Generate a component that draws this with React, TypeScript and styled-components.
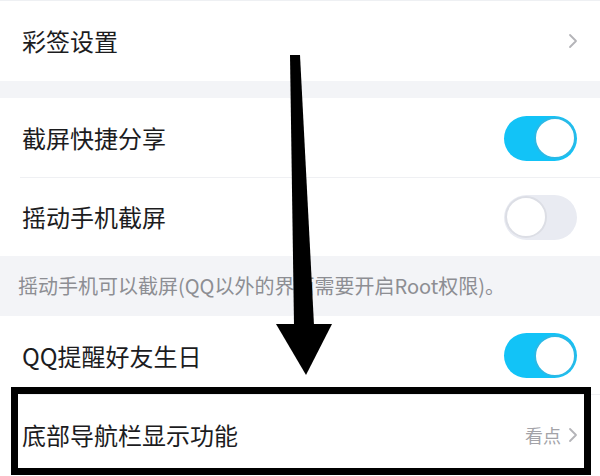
import React from "react";
import styled, { createGlobalStyle } from "styled-components";

const Global = createGlobalStyle`
  html, body { margin: 0; padding: 0; background: #ffffff; }
  body { font-family: "Noto Sans CJK SC", "Noto Sans", sans-serif; }
`;

const Page = styled.div`
  position: relative;
  width: 600px;
  height: 476px;
  overflow: hidden;
  background: #ffffff;
  border-top: 1px solid #eef0f3;
  box-sizing: border-box;
  display: flex;
  flex-direction: column;
`;

const Row = styled.div<{ $h: number; $divider?: boolean }>`
  height: ${(p) => p.$h}px;
  flex: none;
  display: flex;
  align-items: center;
  justify-content: space-between;
  padding: 0 22px 0 22px;
  box-sizing: border-box;
  background: #ffffff;
  position: relative;
  ${(p) =>
    p.$divider
      ? `&::after { content: ""; position: absolute; left: 20px; right: 0; bottom: 0; height: 1px; background: #eff0f3; }`
      : ""}
`;

const Label = styled.span`
  font-size: 24px;
  color: #1c1c1e;
  line-height: 1;
`;

const Band = styled.div<{ $h: number }>`
  height: ${(p) => p.$h}px;
  flex: none;
  background: #f3f4f7;
  display: flex;
  align-items: center;
  padding: 0 18px;
  box-sizing: border-box;
`;

const Note = styled.span`
  font-size: 20px;
  color: #8d8e93;
  line-height: 1;
`;

const Right = styled.div`
  display: flex;
  align-items: center;
  gap: 7px;
`;

const Hint = styled.span`
  font-size: 18px;
  color: #a3a3a8;
  line-height: 1;
`;

const Switch = styled.div<{ $on: boolean }>`
  width: 73px;
  height: 45px;
  border-radius: 23px;
  box-sizing: border-box;
  background: ${(p) => (p.$on ? "#12c3f7" : "#e9ebf2")};
  display: flex;
  align-items: center;
  justify-content: ${(p) => (p.$on ? "flex-end" : "flex-start")};
  padding: 0 1px;
  margin-right: 1px;
`;

const Knob = styled.div<{ $on: boolean }>`
  width: 42px;
  height: 42px;
  border-radius: 50%;
  background: #ffffff;
  box-sizing: border-box;
  border: 2px solid ${(p) => (p.$on ? "#2bb9e6" : "#dcdee5")};
`;

const Highlight = styled.div`
  position: absolute;
  left: 11px;
  top: 386px;
  width: 580px;
  height: 88px;
  border: 7px solid #000;
  box-sizing: border-box;
  pointer-events: none;
`;

const ArrowSvg = styled.svg`
  position: absolute;
  left: 0;
  top: 0;
  pointer-events: none;
`;

const Chevron = () => (
  <svg width={10} height={16} viewBox="0 0 10 16">
    <path d="M2 2 L8 8 L2 14" fill="none" stroke="#b4b4b8" strokeWidth="1.8" strokeLinecap="round" strokeLinejoin="round" />
  </svg>
);

const Toggle = ({ on }: { on: boolean }) => (
  <Switch $on={on}>
    <Knob $on={on} />
  </Switch>
);

export default function App() {
  return (
    <>
      <Global />
      <Page>
        <Row $h={80}>
          <Label>彩签设置</Label>
          <Chevron />
        </Row>
        <Band $h={17} />
        <Row $h={80} $divider>
          <Label>截屏快捷分享</Label>
          <Toggle on />
        </Row>
        <Row $h={78}>
          <Label>摇动手机截屏</Label>
          <Toggle on={false} />
        </Row>
        <Band $h={60}>
          <Note>摇动手机可以截屏(QQ以外的界面需要开启Root权限)。</Note>
        </Band>
        <Row $h={79} $divider>
          <Label>QQ提醒好友生日</Label>
          <Toggle on />
        </Row>
        <Row $h={80}>
          <Label>底部导航栏显示功能</Label>
          <Right>
            <Hint>看点</Hint>
            <Chevron />
          </Right>
        </Row>
        <Highlight />
        <ArrowSvg width={600} height={476} viewBox="0 0 600 476">
          <polygon points="290,54 300,54 314,324 294,324" fill="#000" />
          <polygon points="276,323 332,323 306,374" fill="#000" />
        </ArrowSvg>
      </Page>
    </>
  );
}
